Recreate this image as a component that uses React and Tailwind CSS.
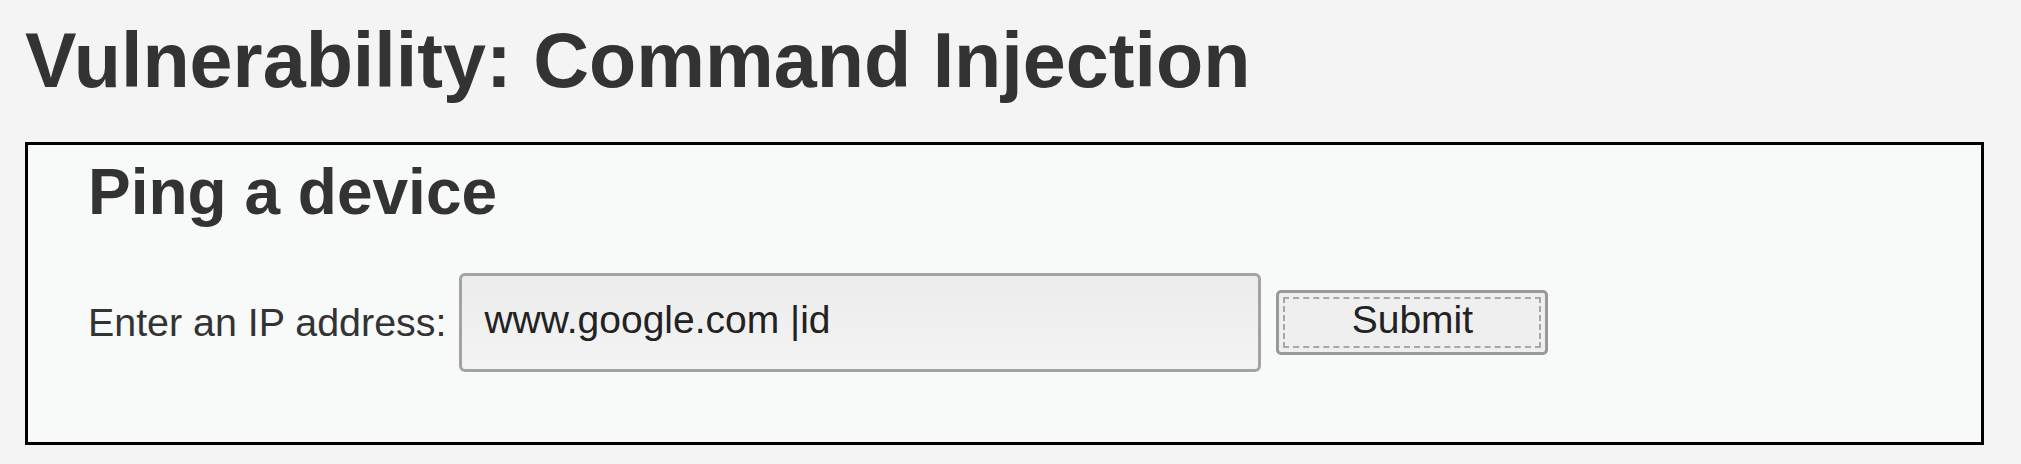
import React, { useState } from "react";

export default function App() {
  const [ip, setIp] = useState("www.google.com |id");

  return (
    <div className="min-h-screen bg-[#f4f4f4] pl-[25px] pr-[37px] text-[#333] font-['Liberation_Sans',Arial,sans-serif]">
      {/* Page title */}
      <h1 className="pt-[22px] text-[77.3px] font-bold leading-none">Vulnerability: Command Injection</h1>

      {/* Vulnerable code area */}
      <div className="mt-[43px] h-[303px] border-[3px] border-black bg-[#f8f9f9] pl-[60px] pt-[15px]">
        <h2 className="text-[64px] font-bold leading-none">Ping a device</h2>

        <form className="mt-[49px] flex items-center" onSubmit={(e) => e.preventDefault()}>
          <label className="text-[39.4px] leading-none text-[#333]">Enter an IP address:</label>
          <input
            type="text"
            value={ip}
            onChange={(e) => setIp(e.target.value)}
            className="ml-[13px] h-[99px] w-[802px] rounded-[6px] border-[3px] border-[#a3a3a3] bg-gradient-to-b from-[#ececec] to-[#f4f4f4] pb-[6px] pl-[22px] text-[39px] text-[#222] outline-none font-['Liberation_Sans',Arial,sans-serif]"
          />
          <button
            type="submit"
            className="ml-[15px] h-[65px] w-[272px] rounded-[5px] border-[3px] border-[#999] bg-[#efefef] pb-[7px] text-[39px] leading-none text-[#222] outline-2 outline-dashed outline-[#a8a8a8] outline-offset-[-9px] font-['Liberation_Sans',Arial,sans-serif]"
          >
            Submit
          </button>
        </form>
      </div>
    </div>
  );
}
